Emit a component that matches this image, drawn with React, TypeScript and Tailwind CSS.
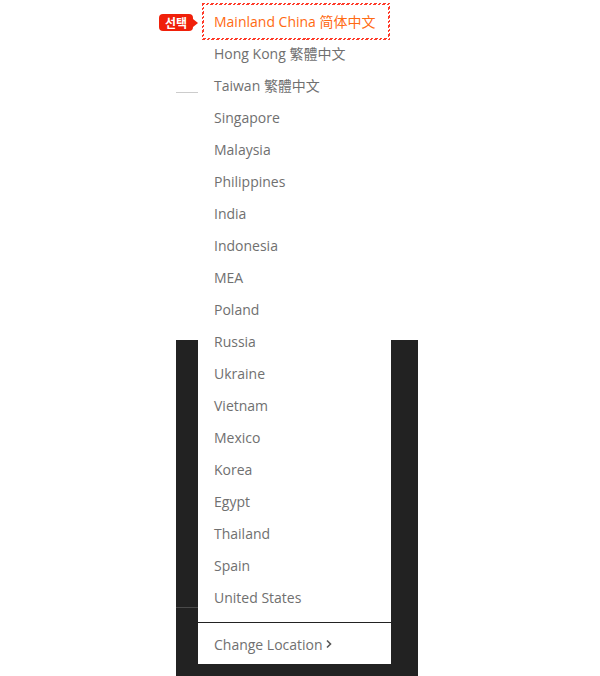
import React from "react";

const items = [
  "Hong Kong 繁體中文",
  "Taiwan 繁體中文",
  "Singapore",
  "Malaysia",
  "Philippines",
  "India",
  "Indonesia",
  "MEA",
  "Poland",
  "Russia",
  "Ukraine",
  "Vietnam",
  "Mexico",
  "Korea",
  "Egypt",
  "Thailand",
  "Spain",
  "United States",
];

export default function App() {
  return (
    <div
      className="relative w-[600px] h-[676px] overflow-hidden bg-white"
      style={{ fontFamily: '"Open Sans", "Noto Sans CJK SC", "Noto Sans CJK KR", sans-serif' }}
    >
      {/* dark footer panel behind the menu */}
      <div className="mt-[340px] ml-[176px] w-[242px] h-[336px] bg-[#222222] flex flex-col">
        <div className="mt-[267px] w-[22px] h-px bg-[#4a4a4a]" />
      </div>

      {/* thin line beside Taiwan */}
      <div className="absolute left-[176px] top-[92px] w-[22px] h-px bg-[#cccccc]" />

      {/* dropdown menu */}
      <div className="absolute left-[198px] top-0 w-[193px] h-[664px] bg-white flex flex-col pt-[6px]">
        <div className="relative h-[32px] flex items-center">
          <div className="absolute left-[-39px] top-[8px] flex items-center">
            <div
              className="h-[17px] w-[34px] rounded-[4px] bg-[#f0200a] text-white text-[12px] font-bold leading-[17px] text-center"
              style={{ fontFamily: '"Noto Sans CJK KR", sans-serif' }}
            >
              선택
            </div>
            <div className="w-0 h-0 border-y-[4px] border-y-transparent border-l-[5px] border-l-[#f0200a]" />
          </div>
          <div className="ml-[4px] mr-[1px] w-[188px] h-[37px] -mt-[1px] p-[2px] bg-[repeating-linear-gradient(-45deg,#ff3b2a_0px,#ff3b2a_1.8px,#ffffff_1.8px,#ffffff_3.2px)]">
            <div className="w-full h-full bg-white flex items-center pl-[10px] text-[14px] text-[#ff6a13]">
              Mainland China 简体中文
            </div>
          </div>
        </div>
        <div className="flex flex-col -mt-px">
          {items.map((t) => (
            <div key={t} className="h-[32px] flex items-center pl-[16px] text-[14px] text-[#707070]">
              {t}
            </div>
          ))}
        </div>
        <div className="mt-[9px] h-px bg-[#222222]" />
        <div className="h-[40px] pt-[2px] flex items-center pl-[16px] text-[14px] text-[#707070]">
          Change Location
          <svg width="8" height="10" viewBox="0 0 8 10" className="ml-[2px]">
            <path d="M2 1.5 L5.5 5 L2 8.5" fill="none" stroke="#555" strokeWidth="1.6" />
          </svg>
        </div>
      </div>
    </div>
  );
}
